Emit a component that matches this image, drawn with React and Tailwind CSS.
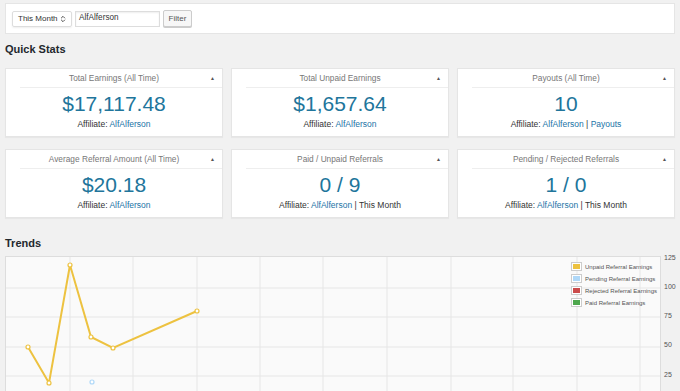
import { ChevronsUpDown } from 'lucide-react'

const stats = [
  [
    { title: 'Total Earnings (All Time)', value: '$17,117.48', extra: null },
    { title: 'Total Unpaid Earnings', value: '$1,657.64', extra: null },
    { title: 'Payouts (All Time)', value: '10', extra: 'payouts' },
  ],
  [
    { title: 'Average Referral Amount (All Time)', value: '$20.18', extra: null },
    { title: 'Paid / Unpaid Referrals', value: '0 / 9', extra: 'month' },
    { title: 'Pending / Rejected Referrals', value: '1 / 0', extra: 'month' },
  ],
]

// puntos del gráfico (coordenadas dentro del svg)
const puntos = [
  [22, 90],
  [43, 126],
  [64, 8],
  [85, 80],
  [107, 91],
  [191, 54],
]

const legend = [
  { label: 'Unpaid Referral Earnings', color: 'bg-[#edc240]' },
  { label: 'Pending Referral Earnings', color: 'bg-[#afd8f8]' },
  { label: 'Rejected Referral Earnings', color: 'bg-[#cb4b4b]' },
  { label: 'Paid Referral Earnings', color: 'bg-[#4da74d]' },
]

function StatCard({ stat }) {
  return (
    <div className="bg-white border border-[#e5e5e5] shadow-[0_1px_1px_rgba(0,0,0,0.04)] pb-[6px]">
      <div className="relative ml-[14px] border-b border-[#eeeeee] h-[19px] flex items-center justify-center pr-[14px]">
        <span className="text-[8.3px] text-[#777777] whitespace-nowrap">{stat.title}</span>
        <span className="absolute right-[7px] top-[6px] text-[5px] text-[#555555]">▲</span>
      </div>
      <div className="text-center pt-[2px]">
        <div className="text-[21px] leading-[28px] text-[#21759b]">{stat.value}</div>
        <div className="text-[8.5px] leading-[12px] text-[#333333] whitespace-nowrap">
          Affiliate: <span className="text-[#2173a6]">AlfAlferson</span>
          {stat.extra === 'payouts' && (
            <>
              {' | '}
              <span className="text-[#2173a6]">Payouts</span>
            </>
          )}
          {stat.extra === 'month' && ' | This Month'}
        </div>
      </div>
    </div>
  )
}

function TrendsChart() {
  const vLines = [64, 127, 191, 254, 317, 381, 445, 507, 571, 634]
  const hLines = [31, 60, 90, 119]
  const path = puntos.map((p) => p.join(',')).join(' ')
  return (
    <div className="flex">
      <div className="relative w-[656px] h-[140px] border border-[#dddddd] bg-[#fafafa]">
        <svg width="654" height="138" className="block">
          {vLines.map((x) => (
            <line key={x} x1={x} y1="0" x2={x} y2="138" stroke="#e6e6e6" strokeWidth="1" />
          ))}
          {hLines.map((y) => (
            <line key={y} x1="0" y1={y} x2="654" y2={y} stroke="#e6e6e6" strokeWidth="1" />
          ))}
          <polyline points={path} fill="none" stroke="#edc240" strokeWidth="2" />
          {puntos.map(([x, y]) => (
            <circle key={x} cx={x} cy={y} r="2" fill="#ffffff" stroke="#edc240" strokeWidth="1.2" />
          ))}
          <circle cx="86" cy="125" r="2" fill="#ffffff" stroke="#afd8f8" strokeWidth="1.2" />
        </svg>
        <div className="absolute left-[565px] top-[5px] flex flex-col gap-[3px]">
          {legend.map((item) => (
            <div key={item.label} className="flex items-center gap-[3px]">
              <span className="border border-[#cccccc] p-[1px] bg-white">
                <span className={`block w-[7px] h-[5px] ${item.color}`}></span>
              </span>
              <span className="text-[6px] leading-[8px] text-[#545454] whitespace-nowrap">{item.label}</span>
            </div>
          ))}
        </div>
      </div>
      <div className="relative w-[19px] text-[7px] text-[#545454]">
        <span className="absolute left-[3px] top-[-3px]">125</span>
        <span className="absolute left-[3px] top-[26px]">100</span>
        <span className="absolute left-[3px] top-[55px]">75</span>
        <span className="absolute left-[3px] top-[84px]">50</span>
        <span className="absolute left-[3px] top-[114px]">25</span>
      </div>
    </div>
  )
}

export default function App() {
  return (
    <div
      className="w-[680px] h-[391px] overflow-hidden bg-[#f1f1f1] pt-[3px] px-[5px]"
      style={{ fontFamily: '"Liberation Sans", Arial, sans-serif' }}
    >
      {/* Filtros */}
      <div className="w-[670px] h-[31px] bg-white border border-[#e5e5e5] flex items-center gap-[3px] pl-[6px]">
        <div className="w-[60px] h-[16px] border border-[#dddddd] rounded-[2px] shadow-[0_1px_2px_rgba(0,0,0,0.07)] flex items-center justify-between pl-[5px] pr-[4px]">
          <span className="text-[8px] text-[#333333] whitespace-nowrap">This Month</span>
          <ChevronsUpDown size={8} strokeWidth={2.5} className="text-[#333333]" />
        </div>
        <div className="w-[85px] h-[16px] border border-[#dddddd] shadow-[inset_0_1px_2px_rgba(0,0,0,0.07)] flex items-center pl-[3px]">
          <span className="text-[8.2px] text-[#333333]">AlfAlferson</span>
        </div>
        <div className="w-[29px] h-[17px] border border-[#cccccc] rounded-[2px] bg-[#f7f7f7] shadow-[0_1px_0_#cccccc] flex items-center justify-center">
          <span className="text-[8px] text-[#555555]">Filter</span>
        </div>
      </div>

      <h2 className="text-[11px] font-bold text-[#23282d] mt-[8px] leading-[14px]">Quick Stats</h2>

      <div className="mt-[12px] flex flex-col gap-[12px] w-[670px]">
        {stats.map((fila, i) => (
          <div key={i} className="grid grid-cols-3 gap-[8px]">
            {fila.map((stat) => (
              <StatCard key={stat.title} stat={stat} />
            ))}
          </div>
        ))}
      </div>

      <h2 className="text-[11px] font-bold text-[#23282d] mt-[18px] leading-[14px]">Trends</h2>

      <div className="mt-[6px]">
        <TrendsChart />
      </div>
    </div>
  )
}
